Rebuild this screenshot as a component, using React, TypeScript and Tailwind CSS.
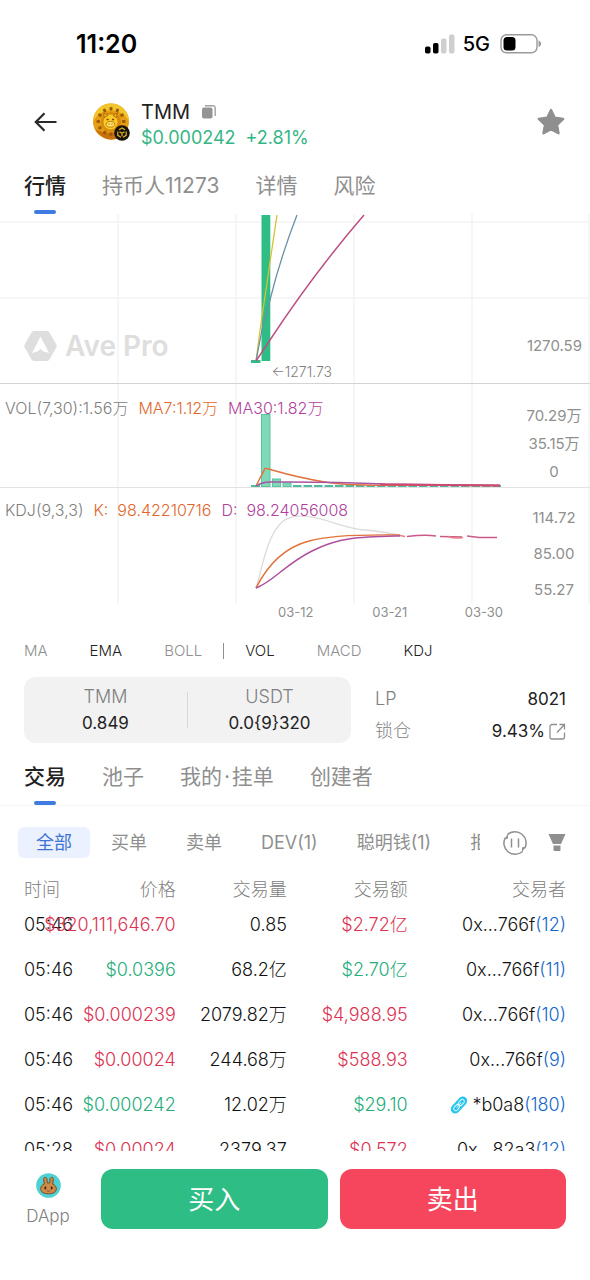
import React, { useState } from "react";

const GRID_X = [118, 236, 354, 472, 589];

function GridLines({ height, rows = [] }: { height: number; rows?: number[] }) {
  return (
    <g stroke="#f3f3f3" strokeWidth="1.5">
      {GRID_X.map((x) => (
        <line key={x} x1={x} x2={x} y1="0" y2={height} />
      ))}
      {rows.map((y) => (
        <line key={y} x1="0" x2="590" y1={y} y2={y} />
      ))}
    </g>
  );
}

function Plot({ height, children }: { height: number; children: React.ReactNode }) {
  return (
    <svg
      className="absolute inset-0 h-full w-full"
      viewBox={`0 0 590 ${height}`}
      preserveAspectRatio="none"
      fill="none"
      aria-hidden="true"
    >
      {children}
    </svg>
  );
}

function StatusBar() {
  return (
    <div className="flex h-[88px] shrink-0 items-center justify-between pr-12 pl-[76px]">
      <span className="text-[25px] leading-8 font-semibold text-black">11:20</span>
      <div className="flex items-center gap-2">
        <svg width="30" height="20" viewBox="0 0 30 20" aria-hidden="true">
          <rect x="0" y="12.500" width="5.500" height="7" rx="1.800" fill="#000" />
          <rect x="8" y="9" width="5.500" height="10.500" rx="1.800" fill="#000" />
          <rect x="16" y="4.500" width="5.500" height="15" rx="1.800" fill="#cfcfcf" />
          <rect x="24" y="0.500" width="5.500" height="19" rx="1.800" fill="#cfcfcf" />
        </svg>
        <span className="text-[20px] leading-6 font-medium text-black">5G</span>
        <svg width="44" height="20" viewBox="0 0 44 20" aria-hidden="true">
          <rect x="3" y="0.800" width="36" height="18" rx="5.500" fill="none" stroke="#9a9a9a" strokeWidth="1.400" />
          <rect x="5.500" y="3" width="12" height="13.500" rx="3.500" fill="#000" />
          <path d="M40.500 6.500c1.800.7 2.600 1.900 2.600 3.300s-.8 2.600-2.600 3.300z" fill="#9a9a9a" />
        </svg>
      </div>
    </div>
  );
}

function TokenLogo() {
  const marks = Array.from({ length: 12 }, (_, i) => i * 30);
  return (
    <svg width="38" height="38" viewBox="0 0 38 38" aria-hidden="true">
      <circle cx="18" cy="18.500" r="18" fill="#e59d12" />
      <path d="M18 .5a18 18 0 0 1 18 18c-4-7-9-11-18-11S4 12 0 18.500A18 18 0 0 1 18 .5z" fill="#f2c52c" />
      <path d="M2 26c5 8 11 10.500 17 10.500A18 18 0 0 0 35 25c-8 5-24 7-33 1z" fill="#c9700f" />
      {marks.map((a) => (
        <rect key={a} x="16.500" y="4" width="3" height="3.500" rx="1" fill="#9c5a08" transform={`rotate(${a} 18 18.500)`} />
      ))}
      <circle cx="18" cy="19" r="10" fill="#d8890f" />
      <ellipse cx="17.500" cy="19" rx="7" ry="7.500" fill="#f8cb26" />
      <path d="M11.500 14.500l-1-4.500 4.500 2.500zM23 14.500l1.500-4.500-4.500 2.500z" fill="#f5c020" stroke="#9c5a08" strokeWidth=".7" />
      <path d="M13.500 16.500h2.200M19 16.500h2.200" stroke="#874803" strokeWidth="1.600" />
      <ellipse cx="17.500" cy="21.300" rx="4.300" ry="2.900" fill="#ffe063" stroke="#ad6807" strokeWidth=".8" />
      <path d="M15.500 21h1M18.500 21h1" stroke="#874803" />
      <circle cx="29" cy="30" r="7.800" fill="#15120b" />
      <g fill="none" stroke="#e6b422" strokeWidth="1.200">
        <path d="M26 26.700L29 25l3 1.700M24.800 28.500v3.800l3.200 1.900M33.200 28.500v3.800L30 34.200" />
        <path d="M26.500 28.700L29 30.200l2.500-1.500M29 30.200v3" />
      </g>
    </svg>
  );
}

function Header() {
  return (
    <header className="flex h-[68px] shrink-0 items-center px-6">
      <button aria-label="返回" className="w-[69px]">
        <svg className="ml-2.5" width="24" height="20" viewBox="0 0 24 20" fill="none" stroke="#2a2a2a" strokeWidth="2.200" aria-hidden="true">
          <path d="M22.500 10H2M10.500 1.200L1.800 10l8.700 8.800" />
        </svg>
      </button>
      <TokenLogo />
      <div className="ml-2.5 flex-1 pt-[5px]">
        <div className="flex items-center gap-3 text-[20px] leading-[25px] text-[#222]">
          TMM
          <button aria-label="复制">
            <svg width="14" height="14" viewBox="0 0 14 14" aria-hidden="true">
              <rect x="0" y="2.500" width="10.500" height="11" rx="2" fill="#949494" />
              <path d="M3 .8h8.200A2 2 0 0 1 13.200 2.800V11" fill="none" stroke="#a2a2a2" strokeWidth="1.400" />
            </svg>
          </button>
        </div>
        <div className="flex gap-2.5 text-[18px] leading-[25px] text-[#35b586]">
          <span>$0.000242</span>
          <span>+2.81%</span>
        </div>
      </div>
      <button aria-label="收藏">
        <svg width="30" height="30" viewBox="0 0 30 30" aria-hidden="true">
          <path
            d="M15 3l3.700 7.700 8.500 1.200-6.200 6 1.500 8.400L15 22.300l-7.500 4 1.500-8.400-6.200-6 8.500-1.200z"
            fill="#8f8f8f"
            stroke="#8f8f8f"
            strokeWidth="2.400"
            strokeLinejoin="round"
          />
        </svg>
      </button>
    </header>
  );
}

function Tabs({ items }: { items: string[] }) {
  const [active, setActive] = useState(0);
  return (
    <nav className="flex shrink-0 gap-9 px-6" role="tablist">
      {items.map((label, i) => (
        <button
          key={label}
          role="tab"
          aria-selected={i === active}
          onClick={() => setActive(i)}
          className={`flex flex-col items-center gap-2.5 text-[21px] leading-7 whitespace-nowrap ${
            i === active ? "font-medium text-[#222]" : "text-[#8f8f8f]"
          }`}
        >
          {label}
          <span className={`h-1 w-[22px] rounded-full ${i === active ? "bg-[#3f7be0]" : ""}`} />
        </button>
      ))}
    </nav>
  );
}

function PricePanel() {
  return (
    <div className="relative flex h-[170px] flex-col border-b border-[#d4d4d4]">
      <Plot height={169}>
        <GridLines height={169} rows={[8, 84]} />
        <rect x="251" y="146" width="9.500" height="3" fill="#2ebd85" />
        <rect x="261.500" y="1" width="8.800" height="146" fill="#2ebd85" />
        <path d="M256 147L261 109 266 76 270 48 277 1" stroke="#d9c034" strokeWidth="1.300" />
        <path d="M256 147L262 116 270 86Q280 45 297 1" stroke="#6a91a8" strokeWidth="1.300" />
        <path d="M256 147L270 126Q314 59 364 1" stroke="#bd4f83" strokeWidth="1.500" />
      </Plot>
      <div className="relative mt-auto flex items-center justify-between pr-2 pb-[19px] pl-6">
        <div className="flex items-center gap-2 text-[#dedede]">
          <svg width="33" height="30" viewBox="0 0 33 30" aria-hidden="true">
            <path d="M10 0h13a3 3 0 0 1 2.500 1.500l6.800 12a3 3 0 0 1 0 3l-6.800 12A3 3 0 0 1 23 30H10a3 3 0 0 1-2.500-1.500l-6.800-12a3 3 0 0 1 0-3l6.800-12A3 3 0 0 1 10 0z" fill="#dedede" />
            <path d="M16.500 5.500L25 22l-5.500-1.500-3-2.500-3 2.500L8 22z" fill="#fff" />
          </svg>
          <span className="text-[28px] leading-9 font-semibold">Ave Pro</span>
        </div>
        <span className="text-[15px] leading-5 text-[#8f8f8f]">1270.59</span>
      </div>
      <span className="absolute bottom-px left-[46%] text-[14px] leading-5 font-light text-[#808080]">←1271.73</span>
    </div>
  );
}

function VolumePanel() {
  const bars = Array.from({ length: 20 }, (_, i) => 293 + i * 10.5);
  return (
    <div className="relative flex h-[104px] justify-between border-b border-[#e2e2e2]">
      <Plot height={103}>
        <GridLines height={103} />
        <g fill="#7fd8b8" stroke="#5cc5a0" strokeWidth="1">
          <rect x="261.500" y="30.500" width="8.500" height="72" />
          <rect x="272.500" y="95" width="8" height="7.500" />
          <rect x="283" y="99" width="8" height="3.500" />
        </g>
        <g fill="#4cbda0">
          <rect x="251" y="101" width="9" height="2" />
          {bars.map((x) => (
            <rect key={x} x={x} y="101" width="8.500" height="2" />
          ))}
        </g>
        <path d="M256 102L265 84.500Q268 84 272 86Q300 94 325 98T400 101L500 101.500" stroke="#e2733c" strokeWidth="1.500" />
        <path d="M256 102Q262 98 270 98Q330 97.500 385 100L500 101.500" stroke="#a8559f" strokeWidth="1.500" />
        <path d="M380 100.500L500 101.500" stroke="#cf4a70" strokeWidth="2" />
      </Plot>
      <div className="relative flex gap-2.5 pt-3.5 pl-[5px] text-[16px] leading-5 font-light">
        <span className="text-[#808080]">VOL(7,30):1.56万</span>
        <span className="text-[#e2662b]">MA7:1.12万</span>
        <span className="text-[#b03f9d]">MA30:1.82万</span>
      </div>
      <div className="relative flex w-[72px] flex-col gap-2 pt-[22px] text-center text-[15px] leading-5 text-[#8f8f8f]">
        <span>70.29万</span>
        <span>35.15万</span>
        <span>0</span>
      </div>
    </div>
  );
}

function KdjPanel() {
  return (
    <div className="relative flex h-[116px] justify-between">
      <Plot height={116}>
        <GridLines height={116} />
        <path d="M256 100C262 82 266 49 282 34C294 24 315 29 328 33S352 41 365 42S389 45 400 47" stroke="#dedada" strokeWidth="1.300" />
        <path d="M256 100Q275 62 309 53Q333 46 400 47" stroke="#e2733c" strokeWidth="1.500" />
        <path d="M256 100C273 94 284 77 312 63S360 49 400 48" stroke="#b0509c" strokeWidth="1.500" />
        <path d="M407 48.500Q425 46.500 436 48M440 48.500L462 49M467 48L479 49.500L497 49.500" stroke="#c95a86" strokeWidth="1.500" />
        <path d="M400 47.500L405 48.500M448 48.500Q455 51 463 49.500" stroke="#e77f86" strokeWidth="1.500" />
      </Plot>
      <div className="relative flex gap-2.5 pt-3 pl-[5px] text-[16px] leading-5 font-light">
        <span className="text-[#808080]">KDJ(9,3,3)</span>
        <span className="text-[#e2662b]">K:&nbsp; 98.42210716</span>
        <span className="text-[#b03f9d]">D:&nbsp; 98.24056008</span>
      </div>
      <div className="relative flex w-[72px] flex-col gap-4 pt-5 text-center text-[15px] leading-5 text-[#8f8f8f]">
        <span>114.72</span>
        <span>85.00</span>
        <span>55.27</span>
      </div>
    </div>
  );
}

function Chart() {
  return (
    <section className="shrink-0" aria-label="K线图">
      <PricePanel />
      <VolumePanel />
      <KdjPanel />
      <div className="flex h-4 items-center pl-[42%] text-center text-[13px] leading-4 text-[#8f8f8f]">
        <span className="w-[28%]">03-12</span>
        <span className="w-[27%]">03-21</span>
        <span className="w-[28%]">03-30</span>
      </div>
    </section>
  );
}

function IndicatorRow() {
  const on = "text-[#222]";
  const off = "text-[#8f8f8f]";
  return (
    <div className="flex h-[57px] shrink-0 items-center gap-[21px] px-6 pt-1 text-[15px] leading-5 font-light">
      <div className="flex gap-[42px]">
        <button className={off}>MA</button>
        <button className={on}>EMA</button>
        <button className={off}>BOLL</button>
      </div>
      <span className="h-4 w-px bg-[#8f8f8f]" />
      <div className="flex gap-[42px]">
        <button className={on}>VOL</button>
        <button className={off}>MACD</button>
        <button className={on}>KDJ</button>
      </div>
    </div>
  );
}

function PoolSummary() {
  return (
    <section className="flex shrink-0 gap-6 px-6 text-[17px] leading-7 text-[#222]">
      <div className="flex h-[66px] flex-[327] items-center rounded-xl bg-[#f2f2f2] text-center">
        <div className="flex-1">
          <div className="text-[18px] leading-[27px] font-light text-[#808080]">TMM</div>
          <div className="leading-[27px]">0.849</div>
        </div>
        <div className="h-9 w-px bg-[#d8d8d8]" />
        <div className="flex-1">
          <div className="text-[18px] leading-[27px] font-light text-[#808080]">USDT</div>
          <div className="leading-[27px]">0.0{"{9}"}320</div>
        </div>
      </div>
      <dl className="flex flex-[191] flex-col gap-1 pt-2">
        <div className="flex justify-between">
          <dt className="text-[18px] font-light text-[#808080]">LP</dt>
          <dd>8021</dd>
        </div>
        <div className="flex justify-between">
          <dt className="text-[18px] font-light text-[#808080]">锁仓</dt>
          <dd className="flex items-center gap-1">
            9.43%
            <a href="#lock" aria-label="锁仓详情">
              <svg width="17" height="17" viewBox="0 0 17 17" fill="none" stroke="#8f8f8f" strokeWidth="1.300" aria-hidden="true">
                <path d="M8 1.500H3A2 2 0 0 0 1 3.500V14a2 2 0 0 0 2 2h10.500a2 2 0 0 0 2-2V9.500M10.500 1.500h5v5M15.500 1.500L8 9.500" />
              </svg>
            </a>
          </dd>
        </div>
      </dl>
    </section>
  );
}

function Filters() {
  const items = ["买单", "卖单", "DEV(1)", "聪明钱(1)", "拒绝"];
  return (
    <div className="flex shrink-0 items-center pt-[21px] pr-6 pl-[18px] text-[18px] leading-[31px] text-[#8f8f8f]">
      <div className="flex w-0 flex-1 gap-[39px] overflow-hidden whitespace-nowrap">
        <button className="-mr-[18px] shrink-0 rounded-md bg-[#ebf1fe] px-[18px] text-[#3f74d1]">全部</button>
        {items.map((t) => (
          <button key={t} className="shrink-0">
            {t}
          </button>
        ))}
      </div>
      <button aria-label="暂停" className="ml-[22px]">
        <svg width="26" height="26" viewBox="0 0 26 26" fill="none" stroke="#8f8f8f" strokeWidth="1.500" aria-hidden="true">
          <path d="M5.500 4.500A11.200 11.200 0 0 1 22.600 18.500M20.500 21.500A11.200 11.200 0 0 1 3.400 7.500" />
          <path d="M6 3.500v5l-3.500 1zM20 22.500v-5l3.500-1z" fill="#8f8f8f" stroke="none" />
          <path d="M9.500 8.500v9M16.500 8.500v9" />
        </svg>
      </button>
      <button aria-label="筛选" className="ml-5">
        <svg width="18" height="17" viewBox="0 0 18 17" fill="#8f8f8f" aria-hidden="true">
          <path d="M.5 0h17l-4.500 10H5zM5.500 11.500h7V16a1 1 0 0 1-1 1h-5a1 1 0 0 1-1-1z" />
        </svg>
      </button>
    </div>
  );
}

function LinkIcon() {
  return (
    <svg className="mr-1" width="18" height="20" viewBox="0 0 18 20" fill="none" strokeLinecap="round" aria-hidden="true">
      <g transform="rotate(42 9 10)">
        <rect x="4.500" y="0" width="9" height="20" rx="4.500" fill="#28c3ee" />
        <path d="M7 8V5a2 2 0 0 1 4 0v3a2 2 0 0 1-4 0M7 12v3a2 2 0 0 0 4 0v-3a2 2 0 0 0-4 0M9 7v6" stroke="#d9f7ff" strokeWidth="1" />
      </g>
    </svg>
  );
}

type Trade = {
  time: string;
  price: string;
  amount: string;
  value: string;
  who: string;
  count: string;
  up?: boolean;
  linked?: boolean;
};

const TRADES: Trade[] = [
  { time: "05:46", price: "$320,111,646.70", amount: "0.85", value: "$2.72亿", who: "0x...766f", count: "(12)" },
  { time: "05:46", price: "$0.0396", amount: "68.2亿", value: "$2.70亿", who: "0x...766f", count: "(11)", up: true },
  { time: "05:46", price: "$0.000239", amount: "2079.82万", value: "$4,988.95", who: "0x...766f", count: "(10)" },
  { time: "05:46", price: "$0.00024", amount: "244.68万", value: "$588.93", who: "0x...766f", count: "(9)" },
  { time: "05:46", price: "$0.000242", amount: "12.02万", value: "$29.10", who: "*b0a8", count: "(180)", up: true, linked: true },
  { time: "05:28", price: "$0.00024", amount: "2379.37", value: "$0.572", who: "0x...82a3", count: "(12)" },
];

function TradeTable() {
  return (
    <div className="min-h-0 flex-1 overflow-hidden px-6 pt-[19px]">
      <table className="w-full table-fixed text-right text-[18px] leading-6 font-light whitespace-nowrap text-[#111]">
        <thead>
          <tr className="h-[25px] text-[#808080]">
            <th className="w-[10%] p-0 text-left font-light">时间</th>
            <th className="w-[18%] p-0 font-light">价格</th>
            <th className="w-[20.5%] p-0 font-light">交易量</th>
            <th className="w-[22.3%] p-0 font-light">交易额</th>
            <th className="p-0 font-light">交易者</th>
          </tr>
        </thead>
        <tbody>
          {TRADES.map((t, i) => {
            const tone = t.up ? "text-[#25ad7b]" : "text-[#dc3253]";
            return (
              <tr key={i} className="h-[45px]">
                <td className="p-0 text-left">{t.time}</td>
                <td className={`p-0 ${tone}`}>
                  <div className="flex justify-end">{t.price}</div>
                </td>
                <td className="p-0">{t.amount}</td>
                <td className={`p-0 ${tone}`}>{t.value}</td>
                <td className="p-0">
                  <div className="flex items-center justify-end">
                    {t.linked && <LinkIcon />}
                    {t.who}
                    <a href="#trader" className="text-[#1468c8]">
                      {t.count}
                    </a>
                  </div>
                </td>
              </tr>
            );
          })}
        </tbody>
      </table>
    </div>
  );
}

function Bunny() {
  return (
    <svg width="25" height="25" viewBox="0 0 25 25" aria-hidden="true">
      <circle cx="12.500" cy="12.500" r="12.300" fill="#4fd0d3" />
      <path
        d="M8.300 11L7.600 6.200c-.2-2.200 3-2.400 3.300-.4l.5 4.200h2.200l.5-4.200c.3-2 3.500-1.800 3.300.4L16.700 11c2.300 1 3.600 2.700 3.600 4.800 0 3.200-3.200 5-7.800 5s-7.800-1.800-7.800-5c0-2.100 1.300-3.800 3.600-4.800z"
        fill="#d08a48"
        stroke="#7a4a28"
        strokeWidth="1"
      />
      <ellipse cx="9.300" cy="15" rx="1" ry="1.400" fill="#3a2416" />
      <ellipse cx="15.700" cy="15" rx="1" ry="1.400" fill="#3a2416" />
      <path d="M10.800 17.700q1.700 1.300 3.400 0" fill="none" stroke="#6b4327" strokeWidth=".8" />
    </svg>
  );
}

function Footer() {
  return (
    <footer className="flex h-[129px] shrink-0 items-start gap-3 px-6 pt-[18px]">
      <button className="mr-[17px] flex w-12 flex-col items-center gap-1 pt-1 text-[17px] leading-7 font-light text-[#808080]">
        <Bunny />
        DApp
      </button>
      <button className="h-[60px] flex-1 rounded-xl bg-[#2ebd85] text-[26px] text-white">买入</button>
      <button className="h-[60px] flex-1 rounded-xl bg-[#f6465d] text-[26px] text-white">卖出</button>
    </footer>
  );
}

export default function App() {
  return (
    <main className="flex h-screen flex-col overflow-hidden bg-white font-['Inter','Noto_Sans_CJK_SC',sans-serif]">
      <StatusBar />
      <Header />
      <div className="shrink-0 pt-4">
        <Tabs items={["行情", "持币人11273", "详情", "风险"]} />
      </div>
      <Chart />
      <IndicatorRow />
      <PoolSummary />
      <div className="shrink-0 border-b border-[#f6f6f6] pt-[18px]">
        <Tabs items={["交易", "池子", "我的\u200a·\u200a挂单", "创建者"]} />
      </div>
      <Filters />
      <TradeTable />
      <Footer />
    </main>
  );
}
